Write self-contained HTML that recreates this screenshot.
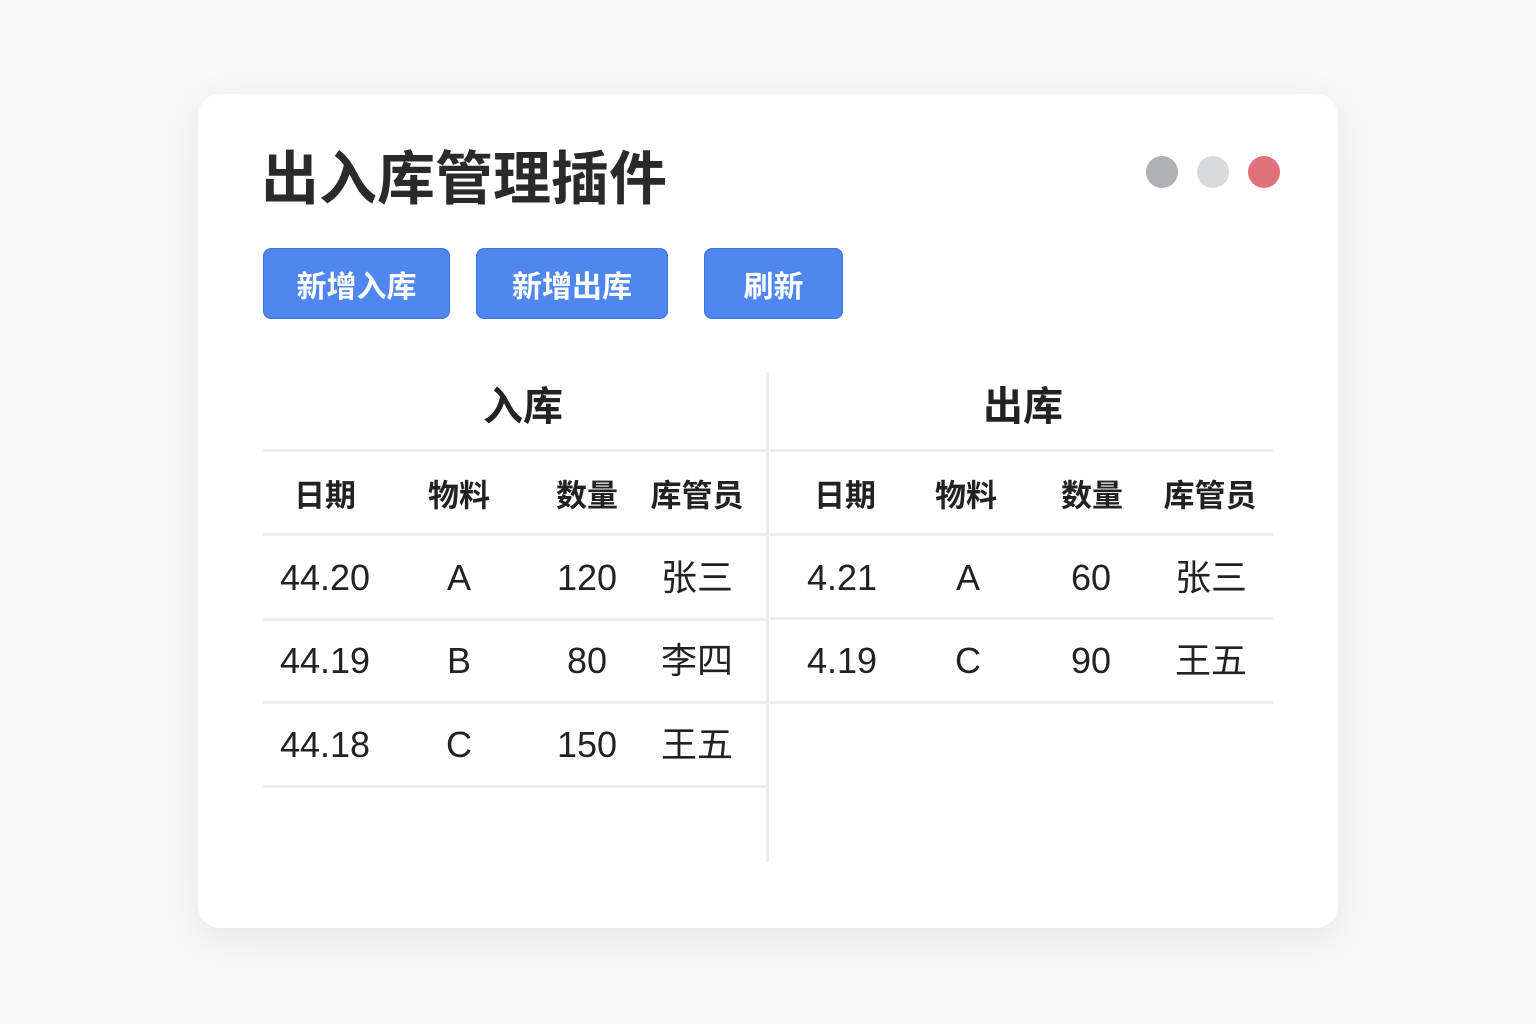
<!DOCTYPE html><html><head><meta charset="utf-8"><style>
body{margin:0;width:1536px;height:1024px;background:#f8f8f8;position:relative;overflow:hidden;font-family:"Liberation Sans","Noto Sans CJK SC",sans-serif;color:#222}
.card{position:absolute;left:198px;top:94px;width:1140px;height:834px;background:#fff;border-radius:22px;box-shadow:0 10px 40px rgba(0,0,0,.08)}
.t{position:absolute;white-space:nowrap;transform:translate(-50%,-50%);line-height:1}
.dot{position:absolute;width:32px;height:32px;border-radius:50%}
.btn{position:absolute;top:248px;height:71px;background:#4f86f0;border-radius:8px;border:1px solid #3a72e0;box-sizing:border-box;color:#fff;font-weight:bold;font-size:30px;display:flex;align-items:center;justify-content:center}
.h{position:absolute;height:3px;background:#ececec}
.v{position:absolute;left:766px;top:372px;width:3px;height:490px;background:#ececec}
.hd{font-size:31px;font-weight:bold}
.d{font-size:36px}
</style></head><body>
<div class="card"></div>
<div class="t" style="left:464px;top:180px;font-size:58px;font-weight:bold;color:#2a2a2a">出入库管理插件</div>
<div class="dot" style="left:1146px;top:156px;background:#b0b1b5"></div>
<div class="dot" style="left:1197px;top:156px;background:#d8d9db"></div>
<div class="dot" style="left:1248px;top:156px;background:#e0707a"></div>
<div class="btn" style="left:263px;width:187px">新增入库</div>
<div class="btn" style="left:476px;width:192px">新增出库</div>
<div class="btn" style="left:704px;width:139px">刷新</div>
<div class="v"></div>
<div class="t" style="left:523px;top:407px;font-size:40px;font-weight:bold">入库</div>
<div class="t" style="left:1023px;top:407px;font-size:40px;font-weight:bold">出库</div>
<div class="h" style="left:263px;width:503px;top:449px"></div>
<div class="h" style="left:770px;width:503px;top:449px"></div>
<div class="h" style="left:263px;width:503px;top:533px"></div>
<div class="h" style="left:770px;width:503px;top:533px"></div>
<div class="h" style="left:263px;width:503px;top:618px"></div>
<div class="h" style="left:770px;width:503px;top:617px"></div>
<div class="h" style="left:263px;width:503px;top:701px"></div>
<div class="h" style="left:770px;width:503px;top:701px"></div>
<div class="h" style="left:263px;width:503px;top:785px"></div>
<div class="t hd" style="left:325px;top:496px">日期</div>
<div class="t hd" style="left:459px;top:496px">物料</div>
<div class="t hd" style="left:587px;top:496px">数量</div>
<div class="t hd" style="left:697px;top:496px">库管员</div>
<div class="t hd" style="left:845px;top:496px">日期</div>
<div class="t hd" style="left:966px;top:496px">物料</div>
<div class="t hd" style="left:1092px;top:496px">数量</div>
<div class="t hd" style="left:1210px;top:496px">库管员</div>
<div class="t d" style="left:325px;top:578px">44.20</div>
<div class="t d" style="left:459px;top:578px">A</div>
<div class="t d" style="left:587px;top:578px">120</div>
<div class="t d" style="left:697px;top:578px">张三</div>
<div class="t d" style="left:325px;top:661px">44.19</div>
<div class="t d" style="left:459px;top:661px">B</div>
<div class="t d" style="left:587px;top:661px">80</div>
<div class="t d" style="left:697px;top:661px">李四</div>
<div class="t d" style="left:325px;top:745px">44.18</div>
<div class="t d" style="left:459px;top:745px">C</div>
<div class="t d" style="left:587px;top:745px">150</div>
<div class="t d" style="left:697px;top:745px">王五</div>
<div class="t d" style="left:842px;top:578px">4.21</div>
<div class="t d" style="left:968px;top:578px">A</div>
<div class="t d" style="left:1091px;top:578px">60</div>
<div class="t d" style="left:1211px;top:578px">张三</div>
<div class="t d" style="left:842px;top:661px">4.19</div>
<div class="t d" style="left:968px;top:661px">C</div>
<div class="t d" style="left:1091px;top:661px">90</div>
<div class="t d" style="left:1211px;top:661px">王五</div>
</body></html>
